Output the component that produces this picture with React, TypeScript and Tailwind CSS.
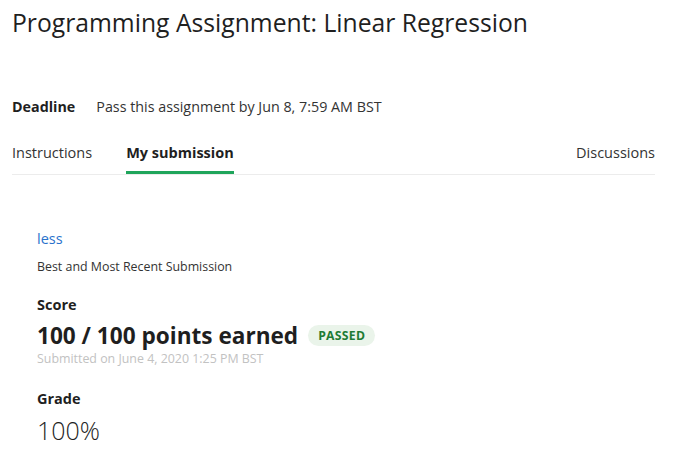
const tabs = ["Instructions", "My submission"];

export default function App() {
  return (
    <div className="h-[459px] w-[700px] overflow-hidden bg-white font-['Open_Sans',sans-serif] text-[#1f1f1f]">
      <div className="px-3 pt-[7px]">
        <h1 className="text-[24.7px] leading-[32px] font-normal">Programming Assignment: Linear Regression</h1>

        <div className="mt-[58px] flex items-center text-[14.3px] leading-[20px]">
          <span className="font-bold">Deadline</span>
          <span className="ml-[21px] text-[#333]">Pass this assignment by Jun 8, 7:59 AM BST</span>
        </div>

        <div className="mt-[25px] mr-[33px] flex items-end border-b border-[#ececec] text-[14.5px]">
          {tabs.map((t, i) => (
            <div
              key={t}
              className={
                i === 1
                  ? "mr-[34px] border-b-[3px] border-[#1fa55b] pb-[7px] font-bold"
                  : "mr-[34px] border-b-[3px] border-transparent pb-[7px] text-[#333]"
              }
            >
              {t}
            </div>
          ))}
          <div className="ml-auto border-b-[3px] border-transparent pb-[7px] text-[#333]">Discussions</div>
        </div>
      </div>

      <div className="pl-[37px] pt-[54px]">
        <a className="block text-[14.5px] leading-[20px] text-[#2a73cc]">less</a>
        <div className="mt-[10px] text-[12.4px] leading-[16px] text-[#333]">Best and Most Recent Submission</div>

        <div className="mt-[20px] text-[14.5px] font-bold leading-[20px]">Score</div>
        <div className="mt-[9px] flex items-center">
          <span className="text-[22.6px] font-bold leading-[24px]">100 / 100 points earned</span>
          <span className="ml-[10px] rounded-full bg-[#eaf4ea] px-[10px] py-[3px] text-[12.2px] font-bold leading-[15px] tracking-[0.3px] text-[#1e7b34]">
            PASSED
          </span>
        </div>
        <div className="mt-[3px] text-[12.4px] leading-[16px] text-[#c2c2c2]">Submitted on June 4, 2020 1:25 PM BST</div>

        <div className="mt-[22px] text-[14.5px] font-bold leading-[20px]">Grade</div>
        <div className="mt-[5px] text-[25px] font-light leading-[32px] text-[#1f1f1f]">100%</div>
      </div>
    </div>
  );
}
